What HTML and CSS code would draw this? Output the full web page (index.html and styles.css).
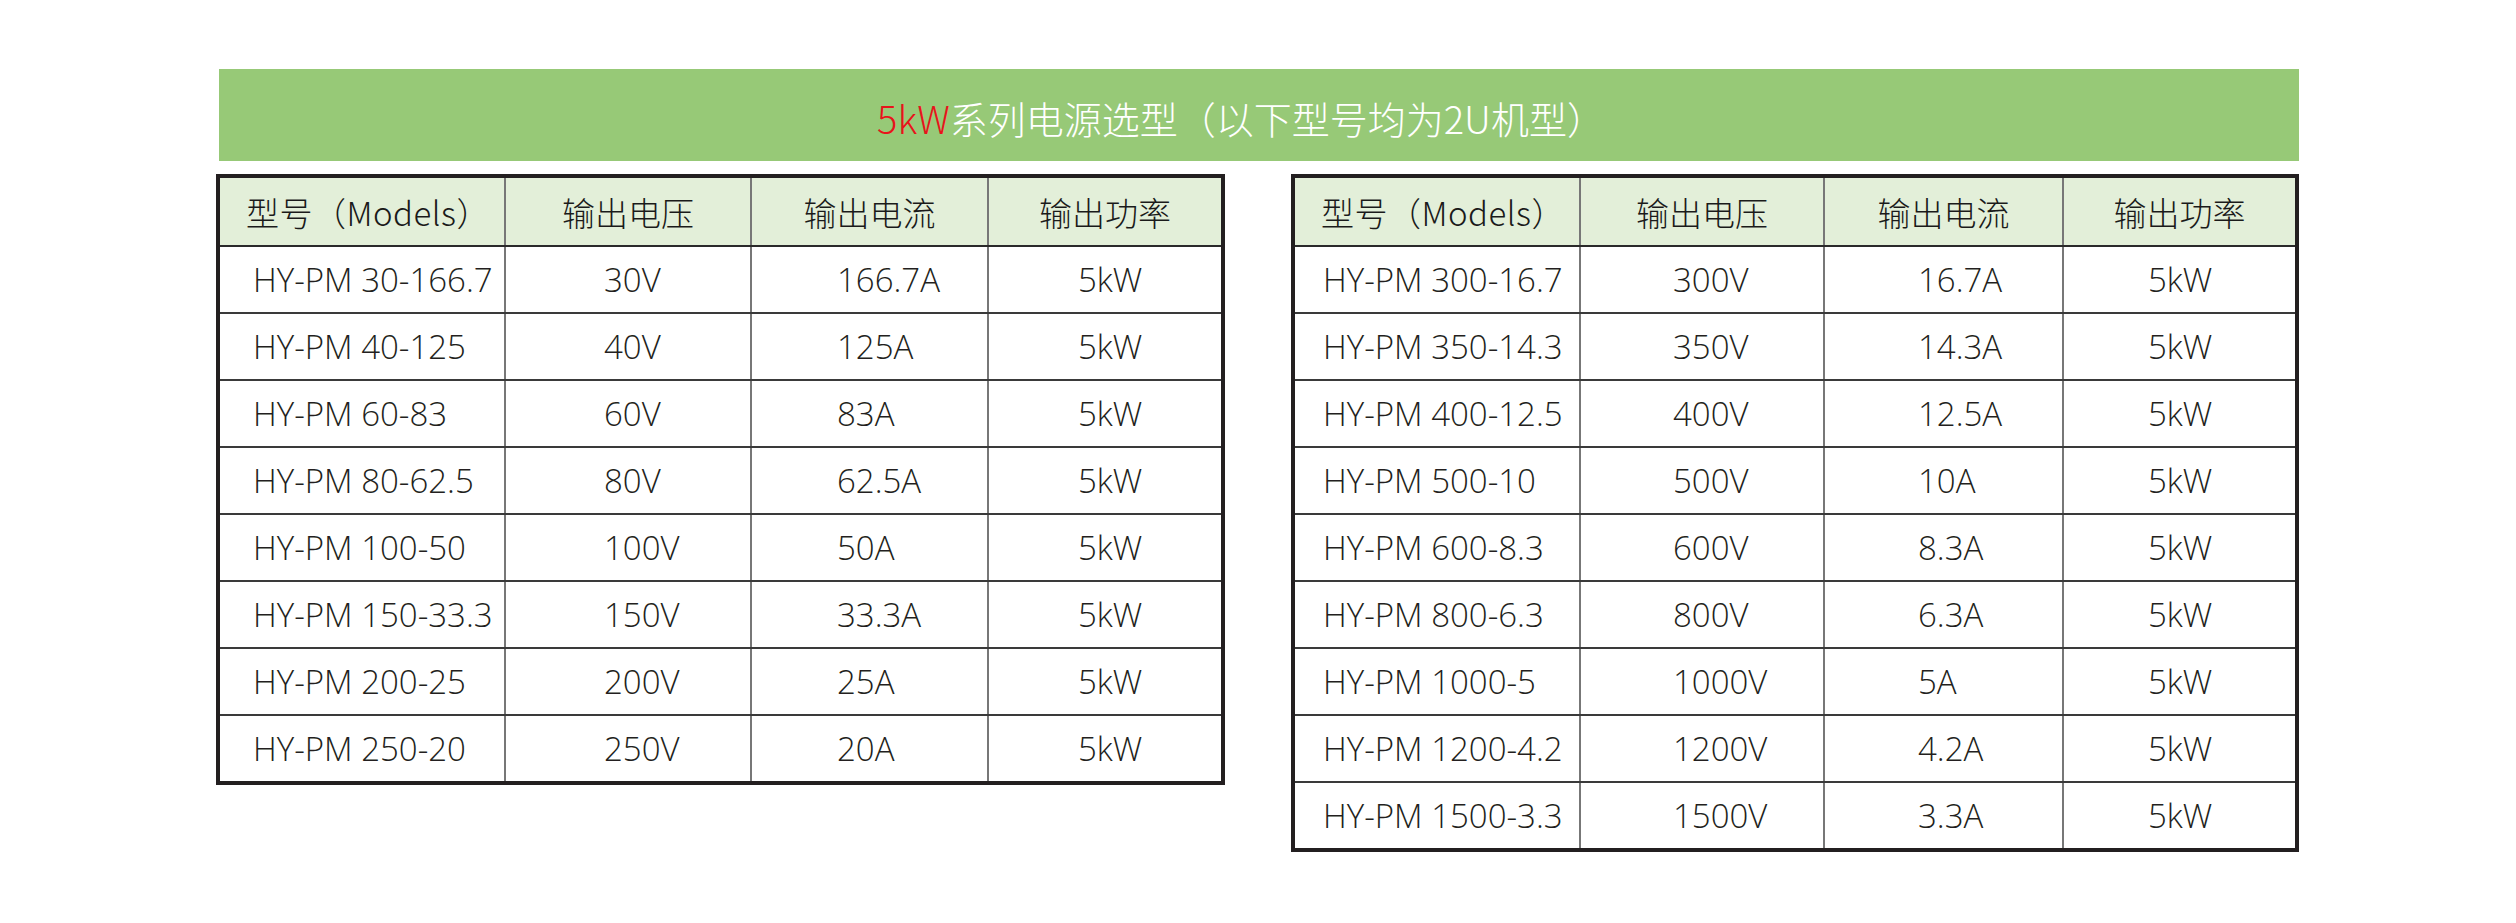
FILE: index.html
```html
<!DOCTYPE html>
<html lang="zh-CN">
<head>
<meta charset="utf-8">
<title>5kW系列电源选型</title>
<link rel="stylesheet" href="styles.css">
</head>
<body>
<div class="page">
  <div class="banner"><span class="red">5kW</span>系列电源选型（以下型号均为2U机型）</div>
  <div class="tables">
    <div class="tbl tl">
      <div class="row head"><div class="c">型号（Models）</div><div class="c">输出电压</div><div class="c">输出电流</div><div class="c">输出功率</div></div>
      <div class="row"><div class="c">HY-PM 30-166.7</div><div class="c">30V</div><div class="c">166.7A</div><div class="c">5kW</div></div>
      <div class="row"><div class="c">HY-PM 40-125</div><div class="c">40V</div><div class="c">125A</div><div class="c">5kW</div></div>
      <div class="row"><div class="c">HY-PM 60-83</div><div class="c">60V</div><div class="c">83A</div><div class="c">5kW</div></div>
      <div class="row"><div class="c">HY-PM 80-62.5</div><div class="c">80V</div><div class="c">62.5A</div><div class="c">5kW</div></div>
      <div class="row"><div class="c">HY-PM 100-50</div><div class="c">100V</div><div class="c">50A</div><div class="c">5kW</div></div>
      <div class="row"><div class="c">HY-PM 150-33.3</div><div class="c">150V</div><div class="c">33.3A</div><div class="c">5kW</div></div>
      <div class="row"><div class="c">HY-PM 200-25</div><div class="c">200V</div><div class="c">25A</div><div class="c">5kW</div></div>
      <div class="row"><div class="c">HY-PM 250-20</div><div class="c">250V</div><div class="c">20A</div><div class="c">5kW</div></div>
    </div>
    <div class="tbl tr">
      <div class="row head"><div class="c">型号（Models）</div><div class="c">输出电压</div><div class="c">输出电流</div><div class="c">输出功率</div></div>
      <div class="row"><div class="c">HY-PM 300-16.7</div><div class="c">300V</div><div class="c">16.7A</div><div class="c">5kW</div></div>
      <div class="row"><div class="c">HY-PM 350-14.3</div><div class="c">350V</div><div class="c">14.3A</div><div class="c">5kW</div></div>
      <div class="row"><div class="c">HY-PM 400-12.5</div><div class="c">400V</div><div class="c">12.5A</div><div class="c">5kW</div></div>
      <div class="row"><div class="c">HY-PM 500-10</div><div class="c">500V</div><div class="c">10A</div><div class="c">5kW</div></div>
      <div class="row"><div class="c">HY-PM 600-8.3</div><div class="c">600V</div><div class="c">8.3A</div><div class="c">5kW</div></div>
      <div class="row"><div class="c">HY-PM 800-6.3</div><div class="c">800V</div><div class="c">6.3A</div><div class="c">5kW</div></div>
      <div class="row"><div class="c">HY-PM 1000-5</div><div class="c">1000V</div><div class="c">5A</div><div class="c">5kW</div></div>
      <div class="row"><div class="c">HY-PM 1200-4.2</div><div class="c">1200V</div><div class="c">4.2A</div><div class="c">5kW</div></div>
      <div class="row"><div class="c">HY-PM 1500-3.3</div><div class="c">1500V</div><div class="c">3.3A</div><div class="c">5kW</div></div>
    </div>
  </div>
</div>
</body>
</html>
```
FILE: styles.css
```css
html, body {
  margin: 0;
  padding: 0;
  background: #ffffff;
}
body {
  width: 2516px;
  height: 923px;
  overflow: hidden;
  font-family: "Open Sans", "Noto Sans CJK SC", sans-serif;
  color: #231f20;
}
.page {
  padding: 69px 0 0 216px;
  width: 2083px;
}
.banner {
  margin-left: 3px;
  height: 92px;
  background: #97c977;
  color: #ffffff;
  font-family: "Noto Sans CJK SC", sans-serif;
  font-weight: 300;
  font-size: 38px;
  display: flex;
  align-items: center;
  justify-content: center;
  padding-right: 36px;
  padding-top: 4px;
  box-sizing: border-box;
}
.red {
  color: #e8141b;
}
.tables {
  margin-top: 13px;
  display: flex;
  align-items: flex-start;
  gap: 66px;
}
.tbl {
  border: 4px solid #231f20;
  box-sizing: border-box;
}
.tl {
  width: 1009px;
}
.tr {
  width: 1008px;
}
.row {
  display: grid;
  height: 67px;
  border-bottom: 2px solid #3a3a3a;
  box-sizing: border-box;
}
.row:last-child {
  border-bottom: none;
  height: 65px;
}
.tl .row {
  grid-template-columns: 286px 246px 237px 232px;
}
.tr .row {
  grid-template-columns: 286px 244px 239px 231px;
}
.row.head {
  height: 69px;
  background: #e3efd9;
  border-bottom: 2px solid #2a2a2a;
}
.c {
  display: flex;
  align-items: center;
  border-right: 2px solid #777777;
  box-sizing: border-box;
  font-size: 33px;
  font-weight: 300;
  white-space: nowrap;
  overflow: hidden;
}
.c:last-child {
  border-right: none;
}
.head .c {
  justify-content: center;
  font-family: "Noto Sans CJK SC", sans-serif;
  font-weight: 300;
  font-size: 33px;
  color: #1a1a1a;
}
.head .c:first-child {
  padding-left: 12px;
  letter-spacing: 0.5px;
}
.tl .row:not(.head) .c:nth-child(1) { padding-left: 33px; }
.tl .row:not(.head) .c:nth-child(2) { padding-left: 98px; }
.tl .row:not(.head) .c:nth-child(3) { padding-left: 85px; }
.tl .row:not(.head) .c:nth-child(4) { padding-left: 89px; }
.tr .row:not(.head) .c:nth-child(1) { padding-left: 28px; }
.tr .row:not(.head) .c:nth-child(2) { padding-left: 92px; }
.tr .row:not(.head) .c:nth-child(3) { padding-left: 93px; }
.tr .row:not(.head) .c:nth-child(4) { padding-left: 84px; }
```
